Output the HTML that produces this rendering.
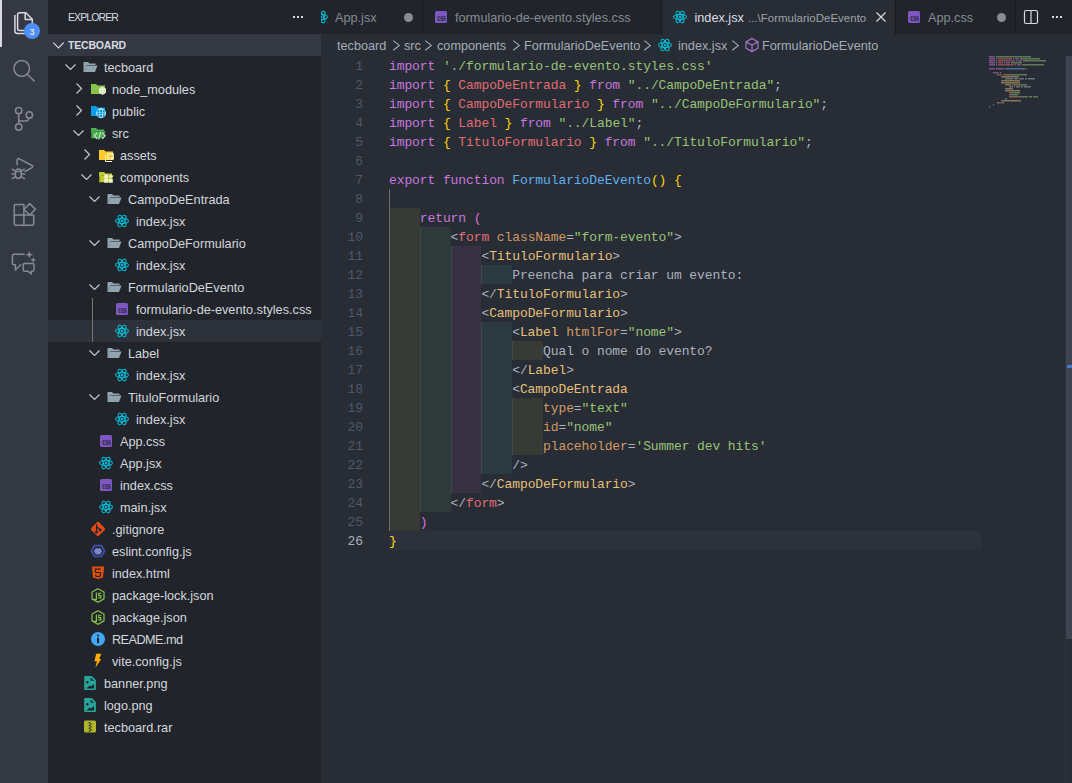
<!DOCTYPE html><html><head><meta charset="utf-8"><style>
*{box-sizing:border-box;margin:0;padding:0}
html,body{width:1072px;height:783px;overflow:hidden;background:#282c34;font-family:"Liberation Sans", sans-serif;}
.abs{position:absolute}
#act{position:absolute;left:0;top:0;width:48px;height:783px;background:#333842}
#side{position:absolute;left:48px;top:0;width:273px;height:783px;background:#21252b;overflow:hidden}
#ed{position:absolute;left:321px;top:0;width:751px;height:783px;background:#282c34;overflow:hidden}
.row{position:absolute;left:0;width:273px;height:22px;}
.lbl{position:absolute;top:0;height:22px;line-height:22px;font-size:12.7px;color:#d4d7dd;white-space:pre}
.ico{position:absolute;top:3px;width:16px;height:16px}
.tw{position:absolute;top:3px;width:16px;height:16px}
.ln{position:absolute;left:0;width:42px;text-align:right;height:19px;line-height:19px;font-family:"Liberation Mono", monospace;font-size:13px;letter-spacing:-0.1px;color:#4f5868;white-space:pre}
.cl{position:absolute;left:68px;height:19px;line-height:19px;font-family:"Liberation Mono", monospace;font-size:13px;letter-spacing:-0.1px;color:#abb2bf;white-space:pre}
.tab{position:absolute;top:0;height:34px;background:#21252b;border-right:1px solid #181a1f}
.tabt{position:absolute;top:1px;height:34px;line-height:34px;font-size:12.7px;white-space:pre}
.bc{position:absolute;top:35px;height:22px;line-height:22px;font-size:12.7px;color:#a5acb7;white-space:pre}
</style></head><body><div id="act"><div class="abs" style="left:0;top:0;width:2px;height:47px;background:#d7dae0"></div><svg class="abs" style="left:0;top:0" width="48" height="300" viewBox="0 0 48 300" fill="none" stroke-width="1.5" stroke-linejoin="round" stroke-linecap="round">
<g stroke="#d7dae0">
<path d="M19.6 12.8H25.8L32.3 19.3V28.5a2 2 0 0 1-2 2H19.6a2 2 0 0 1-2-2V14.8a2 2 0 0 1 2-2z"/>
<path d="M25.2 12.8V19.6H32.3"/>
<path d="M14.9 15.6V31a2.4 2.4 0 0 0 2.4 2.4H25"/>
</g>
<g stroke="#868a92">
<circle cx="21.7" cy="68.4" r="7.8"/><path d="M27.5 74.5L34.2 81"/>
<circle cx="18.7" cy="110.6" r="3.2"/><circle cx="29.3" cy="115" r="3.2"/><circle cx="18.7" cy="127" r="3.2"/>
<path d="M18.7 113.8V123.8"/><path d="M18.7 121.1H25.8a3 3 0 0 0 3-3V118.2"/>
<path d="M17.1 164.8V160.2a1.6 1.6 0 0 1 2.3-1.4L32 165.5a1.2 1.2 0 0 1 0 2.1L25 171.5"/>
<path d="M15.4 172a2.9 2.9 0 0 1 5.8 0v3.6a2.9 2.9 0 0 1-5.8 0z"/>
<path d="M15.4 171.6h5.8M12.2 169.2l3.2 2M24.4 169.2l-3.2 2M12 174h3.4M21.2 174h3.4M12.2 178.6l3.2-2M24.4 178.6l-3.2-2"/>
<path d="M14.3 205.6a1 1 0 0 1 1-1H23.9V225.2H15.3a1 1 0 0 1-1-1z"/>
<path d="M14.3 215H33.7V224.2a1 1 0 0 1-1 1H23.9"/>
<path d="M29.7 203.6L35.4 209.3 29.7 215 24 209.3z"/>
<path d="M24 254.2H14a1.6 1.6 0 0 0-1.6 1.6V263.2a1.6 1.6 0 0 0 1.6 1.6h1.4V270l5.4-5.2"/>
<path d="M24.6 263.6H32.6a1.4 1.4 0 0 1 1.4 1.4V269.8a1.4 1.4 0 0 1-1.4 1.4H31.2V274L28 271.2H24.6a1.4 1.4 0 0 1-1.4-1.4V265a1.4 1.4 0 0 1 1.4-1.4z"/>
</g>
<g fill="#868a92" stroke="none">
<path d="M29.3 250.8L30.3 253.7 33.2 254.7 30.3 255.7 29.3 258.6 28.3 255.7 25.4 254.7 28.3 253.7z"/>
<path d="M33.2 256.9L34 259.1 36.2 259.9 34 260.7 33.2 262.9 32.4 260.7 30.2 259.9 32.4 259.1z"/>
</g>
</svg><div class="abs" style="left:24px;top:23px;width:16px;height:16px;border-radius:8px;background:#4d8ef7;color:#fff;font-size:9px;line-height:18px;text-align:center">3</div></div><div id="side"><div class="abs" style="left:20px;top:0;height:34px;line-height:34px;font-size:10.5px;letter-spacing:-0.9px;color:#d7dae0">EXPLORER</div><div class="abs" style="left:245px;top:16px;width:2px;height:2px;background:#d7dae0"></div><div class="abs" style="left:249px;top:16px;width:2px;height:2px;background:#d7dae0"></div><div class="abs" style="left:253px;top:16px;width:2px;height:2px;background:#d7dae0"></div><div class="abs" style="left:0;top:34px;width:273px;height:22px;background:#333842"></div><svg class="abs" style="left:2.5px;top:36.5px" width="16" height="16" viewBox="0 0 16 16"><path d="M2.3 5.6l5.2 5.4 5.2-5.4" fill="none" stroke="#d7dae0" stroke-width="1.2"/></svg><div class="abs" style="left:20px;top:34px;height:22px;line-height:22px;font-size:10.5px;font-weight:bold;letter-spacing:-0.2px;color:#d7dae0">TECBOARD</div><svg class="abs" style="left:15px;top:59px" width="16" height="16" viewBox="0 0 16 16"><path d="M2.5 5.5l5 5 5-5" fill="none" stroke="#c5c8ce" stroke-width="1.2"/></svg><svg class="abs" style="left:34px;top:59px" width="16" height="16" viewBox="0 0 16 16"><path d="M1.5 3h4.5l1.5 1.5h6v1.5H4.5L2 13H1.5z" fill="#90a4ae"/><path d="M4.2 6.5h11.3l-2.5 6.5H1.7z" fill="#90a4ae"/></svg><div class="lbl" style="left:56px;top:57px">tecboard</div><svg class="abs" style="left:23px;top:81px" width="16" height="16" viewBox="0 0 16 16"><path d="M5.5 2.5l5 5-5 5" fill="none" stroke="#c5c8ce" stroke-width="1.2"/></svg><svg class="abs" style="left:42px;top:81px" width="16" height="16" viewBox="0 0 16 16"><path d="M1 3h5l1.5 1.5H15v8.5H1z" fill="#8bc34a"/><path d="M12.5 5.6l3.6 2.1v4.1l-3.6 2.1-3.6-2.1V7.7z" fill="#dcedc8"/></svg><div class="lbl" style="left:64px;top:79px">node_modules</div><svg class="abs" style="left:23px;top:103px" width="16" height="16" viewBox="0 0 16 16"><path d="M5.5 2.5l5 5-5 5" fill="none" stroke="#c5c8ce" stroke-width="1.2"/></svg><svg class="abs" style="left:42px;top:103px" width="16" height="16" viewBox="0 0 16 16"><path d="M1 3h5l1.5 1.5H15v8.5H1z" fill="#039be5"/><circle cx="11" cy="10.3" r="5" fill="#b3e5fc"/><path d="M7.3 6.9h2v2h-2zM10 6.9h2v2h-2zM12.7 6.9h2v2h-2zM7.3 9.4h2v2h-2zM10 9.4h2v2h-2zM12.7 9.4h2v2h-2zM7.3 11.9h2v2h-2zM10 11.9h2v2h-2zM12.7 11.9h2v2h-2z" fill="#039be5"/></svg><div class="lbl" style="left:64px;top:101px">public</div><svg class="abs" style="left:23px;top:125px" width="16" height="16" viewBox="0 0 16 16"><path d="M2.5 5.5l5 5 5-5" fill="none" stroke="#c5c8ce" stroke-width="1.2"/></svg><svg class="abs" style="left:42px;top:125px" width="16" height="16" viewBox="0 0 16 16"><path d="M1 3h5l1.5 1.5H14v1.5H4L1.5 12.5z" fill="#4caf50"/><path d="M3.5 6.2h12L13 13.2H1z" fill="#4caf50"/><path d="M7.3 7.6l-3 3.2 3 3.2M12.2 7.6l3 3.2-3 3.2M10.6 6.8l-1.8 7.9" stroke="#c8e6c9" stroke-width="1.1" fill="none"/></svg><div class="lbl" style="left:64px;top:123px">src</div><svg class="abs" style="left:31px;top:147px" width="16" height="16" viewBox="0 0 16 16"><path d="M5.5 2.5l5 5-5 5" fill="none" stroke="#c5c8ce" stroke-width="1.2"/></svg><svg class="abs" style="left:50px;top:147px" width="16" height="16" viewBox="0 0 16 16"><path d="M1 3h5l1.5 1.5H15v8.5H1z" fill="#ffca28"/><path d="M7.5 8v6.5h6.5" stroke="#fff9c4" stroke-width="1" fill="none"/><path d="M9.3 6.2h6.5v6.5H9.3z" fill="#fff9c4"/><path d="M10.6 8h4M10.6 9.6h4M10.6 11.2h2.5" stroke="#ffa000" stroke-width="0.9"/></svg><div class="lbl" style="left:72px;top:145px">assets</div><svg class="abs" style="left:31px;top:169px" width="16" height="16" viewBox="0 0 16 16"><path d="M2.5 5.5l5 5 5-5" fill="none" stroke="#c5c8ce" stroke-width="1.2"/></svg><svg class="abs" style="left:50px;top:169px" width="16" height="16" viewBox="0 0 16 16"><path d="M1 3h5l1.5 1.5H14v1.5H4L1.5 12.5z" fill="#c0ca33"/><path d="M3.5 6.2h12L13 13.2H1z" fill="#c0ca33"/><path d="M6.2 5.6h4v3.8h-4zM6.2 10h4v3.8h-4zM10.8 10h4v3.8h-4z" fill="#f0f4c3"/><path d="M12.8 5.2l2.1 2.1-2.1 2.1-2.1-2.1z" fill="#f0f4c3"/></svg><div class="lbl" style="left:72px;top:167px">components</div><svg class="abs" style="left:39px;top:191px" width="16" height="16" viewBox="0 0 16 16"><path d="M2.5 5.5l5 5 5-5" fill="none" stroke="#c5c8ce" stroke-width="1.2"/></svg><svg class="abs" style="left:58px;top:191px" width="16" height="16" viewBox="0 0 16 16"><path d="M1.5 3h4.5l1.5 1.5h6v1.5H4.5L2 13H1.5z" fill="#90a4ae"/><path d="M4.2 6.5h11.3l-2.5 6.5H1.7z" fill="#90a4ae"/></svg><div class="lbl" style="left:80px;top:189px">CampoDeEntrada</div><svg class="abs" style="left:66px;top:213px" width="16" height="16" viewBox="0 0 16 16"><g fill="none" stroke="#00bcd4" stroke-width="1.1"><ellipse cx="8" cy="8" rx="6.4" ry="2.5"/><ellipse cx="8" cy="8" rx="6.4" ry="2.5" transform="rotate(60 8 8)"/><ellipse cx="8" cy="8" rx="6.4" ry="2.5" transform="rotate(-60 8 8)"/></g><circle cx="8" cy="8" r="1.2" fill="#00bcd4"/></svg><div class="lbl" style="left:88px;top:211px">index.jsx</div><svg class="abs" style="left:39px;top:235px" width="16" height="16" viewBox="0 0 16 16"><path d="M2.5 5.5l5 5 5-5" fill="none" stroke="#c5c8ce" stroke-width="1.2"/></svg><svg class="abs" style="left:58px;top:235px" width="16" height="16" viewBox="0 0 16 16"><path d="M1.5 3h4.5l1.5 1.5h6v1.5H4.5L2 13H1.5z" fill="#90a4ae"/><path d="M4.2 6.5h11.3l-2.5 6.5H1.7z" fill="#90a4ae"/></svg><div class="lbl" style="left:80px;top:233px">CampoDeFormulario</div><svg class="abs" style="left:66px;top:257px" width="16" height="16" viewBox="0 0 16 16"><g fill="none" stroke="#00bcd4" stroke-width="1.1"><ellipse cx="8" cy="8" rx="6.4" ry="2.5"/><ellipse cx="8" cy="8" rx="6.4" ry="2.5" transform="rotate(60 8 8)"/><ellipse cx="8" cy="8" rx="6.4" ry="2.5" transform="rotate(-60 8 8)"/></g><circle cx="8" cy="8" r="1.2" fill="#00bcd4"/></svg><div class="lbl" style="left:88px;top:255px">index.jsx</div><svg class="abs" style="left:39px;top:279px" width="16" height="16" viewBox="0 0 16 16"><path d="M2.5 5.5l5 5 5-5" fill="none" stroke="#c5c8ce" stroke-width="1.2"/></svg><svg class="abs" style="left:58px;top:279px" width="16" height="16" viewBox="0 0 16 16"><path d="M1.5 3h4.5l1.5 1.5h6v1.5H4.5L2 13H1.5z" fill="#90a4ae"/><path d="M4.2 6.5h11.3l-2.5 6.5H1.7z" fill="#90a4ae"/></svg><div class="lbl" style="left:80px;top:277px">FormularioDeEvento</div><svg class="abs" style="left:66px;top:301px" width="16" height="16" viewBox="0 0 16 16"><rect x="2" y="2" width="12" height="12" rx="1.5" fill="#7e57c2"/><text x="4.3" y="12.4" font-family="Liberation Sans" font-weight="bold" font-size="8.8" textLength="8.6" lengthAdjust="spacingAndGlyphs" fill="#21252b">css</text></svg><div class="lbl" style="left:88px;top:299px">formulario-de-evento.styles.css</div><div class="abs" style="left:0;top:320px;width:273px;height:22px;background:#2c313a"></div><svg class="abs" style="left:66px;top:323px" width="16" height="16" viewBox="0 0 16 16"><g fill="none" stroke="#00bcd4" stroke-width="1.1"><ellipse cx="8" cy="8" rx="6.4" ry="2.5"/><ellipse cx="8" cy="8" rx="6.4" ry="2.5" transform="rotate(60 8 8)"/><ellipse cx="8" cy="8" rx="6.4" ry="2.5" transform="rotate(-60 8 8)"/></g><circle cx="8" cy="8" r="1.2" fill="#00bcd4"/></svg><div class="lbl" style="left:88px;top:321px">index.jsx</div><svg class="abs" style="left:39px;top:345px" width="16" height="16" viewBox="0 0 16 16"><path d="M2.5 5.5l5 5 5-5" fill="none" stroke="#c5c8ce" stroke-width="1.2"/></svg><svg class="abs" style="left:58px;top:345px" width="16" height="16" viewBox="0 0 16 16"><path d="M1.5 3h4.5l1.5 1.5h6v1.5H4.5L2 13H1.5z" fill="#90a4ae"/><path d="M4.2 6.5h11.3l-2.5 6.5H1.7z" fill="#90a4ae"/></svg><div class="lbl" style="left:80px;top:343px">Label</div><svg class="abs" style="left:66px;top:367px" width="16" height="16" viewBox="0 0 16 16"><g fill="none" stroke="#00bcd4" stroke-width="1.1"><ellipse cx="8" cy="8" rx="6.4" ry="2.5"/><ellipse cx="8" cy="8" rx="6.4" ry="2.5" transform="rotate(60 8 8)"/><ellipse cx="8" cy="8" rx="6.4" ry="2.5" transform="rotate(-60 8 8)"/></g><circle cx="8" cy="8" r="1.2" fill="#00bcd4"/></svg><div class="lbl" style="left:88px;top:365px">index.jsx</div><svg class="abs" style="left:39px;top:389px" width="16" height="16" viewBox="0 0 16 16"><path d="M2.5 5.5l5 5 5-5" fill="none" stroke="#c5c8ce" stroke-width="1.2"/></svg><svg class="abs" style="left:58px;top:389px" width="16" height="16" viewBox="0 0 16 16"><path d="M1.5 3h4.5l1.5 1.5h6v1.5H4.5L2 13H1.5z" fill="#90a4ae"/><path d="M4.2 6.5h11.3l-2.5 6.5H1.7z" fill="#90a4ae"/></svg><div class="lbl" style="left:80px;top:387px">TituloFormulario</div><svg class="abs" style="left:66px;top:411px" width="16" height="16" viewBox="0 0 16 16"><g fill="none" stroke="#00bcd4" stroke-width="1.1"><ellipse cx="8" cy="8" rx="6.4" ry="2.5"/><ellipse cx="8" cy="8" rx="6.4" ry="2.5" transform="rotate(60 8 8)"/><ellipse cx="8" cy="8" rx="6.4" ry="2.5" transform="rotate(-60 8 8)"/></g><circle cx="8" cy="8" r="1.2" fill="#00bcd4"/></svg><div class="lbl" style="left:88px;top:409px">index.jsx</div><svg class="abs" style="left:50px;top:433px" width="16" height="16" viewBox="0 0 16 16"><rect x="2" y="2" width="12" height="12" rx="1.5" fill="#7e57c2"/><text x="4.3" y="12.4" font-family="Liberation Sans" font-weight="bold" font-size="8.8" textLength="8.6" lengthAdjust="spacingAndGlyphs" fill="#21252b">css</text></svg><div class="lbl" style="left:72px;top:431px">App.css</div><svg class="abs" style="left:50px;top:455px" width="16" height="16" viewBox="0 0 16 16"><g fill="none" stroke="#00bcd4" stroke-width="1.1"><ellipse cx="8" cy="8" rx="6.4" ry="2.5"/><ellipse cx="8" cy="8" rx="6.4" ry="2.5" transform="rotate(60 8 8)"/><ellipse cx="8" cy="8" rx="6.4" ry="2.5" transform="rotate(-60 8 8)"/></g><circle cx="8" cy="8" r="1.2" fill="#00bcd4"/></svg><div class="lbl" style="left:72px;top:453px">App.jsx</div><svg class="abs" style="left:50px;top:477px" width="16" height="16" viewBox="0 0 16 16"><rect x="2" y="2" width="12" height="12" rx="1.5" fill="#7e57c2"/><text x="4.3" y="12.4" font-family="Liberation Sans" font-weight="bold" font-size="8.8" textLength="8.6" lengthAdjust="spacingAndGlyphs" fill="#21252b">css</text></svg><div class="lbl" style="left:72px;top:475px">index.css</div><svg class="abs" style="left:50px;top:499px" width="16" height="16" viewBox="0 0 16 16"><g fill="none" stroke="#00bcd4" stroke-width="1.1"><ellipse cx="8" cy="8" rx="6.4" ry="2.5"/><ellipse cx="8" cy="8" rx="6.4" ry="2.5" transform="rotate(60 8 8)"/><ellipse cx="8" cy="8" rx="6.4" ry="2.5" transform="rotate(-60 8 8)"/></g><circle cx="8" cy="8" r="1.2" fill="#00bcd4"/></svg><div class="lbl" style="left:72px;top:497px">main.jsx</div><svg class="abs" style="left:42px;top:521px" width="16" height="16" viewBox="0 0 16 16"><path d="M7.1 1.3a1.3 1.3 0 0 1 1.8 0l5.8 5.8a1.3 1.3 0 0 1 0 1.8l-5.8 5.8a1.3 1.3 0 0 1-1.8 0L1.3 8.9a1.3 1.3 0 0 1 0-1.8z" fill="#e64a19"/><path d="M6.6 3.2v8M6.9 5.6l3 3" stroke="#21252b" stroke-width="1.3"/><circle cx="6.6" cy="11.2" r="1.4" fill="#21252b"/><circle cx="10.2" cy="9" r="1.4" fill="#21252b"/></svg><div class="lbl" style="left:64px;top:519px">.gitignore</div><svg class="abs" style="left:42px;top:543px" width="16" height="16" viewBox="0 0 16 16"><path d="M4.6 2.6h6.8L14.6 8l-3.2 5.5H4.6L1.4 8z" fill="none" stroke="#3f51b5" stroke-width="1.7"/><path d="M5.8 5.3h4.4L12.2 8l-2 3.5H5.8L3.8 8z" fill="#7986cb"/></svg><div class="lbl" style="left:64px;top:541px">eslint.config.js</div><svg class="abs" style="left:42px;top:565px" width="16" height="16" viewBox="0 0 16 16"><path d="M1.9 1.5h12.2l-1.1 11L8 13.9 3 12.5z" fill="#e65100"/><path d="M10.9 4.2H5.3l0.3 3.3h5l-0.4 3.5L8 11.7l-2.2-0.7-0.15-1.4" fill="none" stroke="#21252b" stroke-width="1.2"/></svg><div class="lbl" style="left:64px;top:563px">index.html</div><svg class="abs" style="left:42px;top:587px" width="16" height="16" viewBox="0 0 16 16"><path d="M8 1.7l6 3.4v6.7L8 15.2 2 11.8V5.1z" fill="none" stroke="#8bc34a" stroke-width="1.2"/><path d="M6.4 5.4V12.4H2.6" fill="none" stroke="#8bc34a" stroke-width="1.2"/><path d="M11.4 6.3H8.7V8.6H10.9V10.9H8.3" fill="none" stroke="#8bc34a" stroke-width="1.1"/></svg><div class="lbl" style="left:64px;top:585px">package-lock.json</div><svg class="abs" style="left:42px;top:609px" width="16" height="16" viewBox="0 0 16 16"><path d="M8 1.7l6 3.4v6.7L8 15.2 2 11.8V5.1z" fill="none" stroke="#8bc34a" stroke-width="1.2"/><path d="M6.4 5.4V12.4H2.6" fill="none" stroke="#8bc34a" stroke-width="1.2"/><path d="M11.4 6.3H8.7V8.6H10.9V10.9H8.3" fill="none" stroke="#8bc34a" stroke-width="1.1"/></svg><div class="lbl" style="left:64px;top:607px">package.json</div><svg class="abs" style="left:42px;top:631px" width="16" height="16" viewBox="0 0 16 16"><circle cx="8" cy="8" r="7" fill="#42a5f5"/><rect x="7" y="6.7" width="2" height="5.5" fill="#21252b"/><circle cx="8" cy="4.5" r="1.1" fill="#21252b"/></svg><div class="lbl" style="left:64px;top:629px;letter-spacing:-0.55px">README.md</div><svg class="abs" style="left:42px;top:653px" width="16" height="16" viewBox="0 0 16 16"><path d="M6.2 0.8H11.3L9.2 6H11.3L5.4 14.8 6.9 8.3H4.4z" fill="#ffab00"/></svg><div class="lbl" style="left:64px;top:651px">vite.config.js</div><svg class="abs" style="left:34px;top:675px" width="16" height="16" viewBox="0 0 16 16"><path d="M3.2 1h6.6L13.9 5.1V13.9a1 1 0 0 1-1 1H3.2a1 1 0 0 1-1-1V2a1 1 0 0 1 1-1z" fill="#26a69a"/><path d="M8.6 2.4V5.8H12z" fill="#21252b"/><circle cx="5.3" cy="7.2" r="1.2" fill="#21252b"/><path d="M4.2 13.4l3.5-2.8 1.3 0.9 3-2.6v4.5z" fill="#21252b"/></svg><div class="lbl" style="left:56px;top:673px">banner.png</div><svg class="abs" style="left:34px;top:697px" width="16" height="16" viewBox="0 0 16 16"><path d="M3.2 1h6.6L13.9 5.1V13.9a1 1 0 0 1-1 1H3.2a1 1 0 0 1-1-1V2a1 1 0 0 1 1-1z" fill="#26a69a"/><path d="M8.6 2.4V5.8H12z" fill="#21252b"/><circle cx="5.3" cy="7.2" r="1.2" fill="#21252b"/><path d="M4.2 13.4l3.5-2.8 1.3 0.9 3-2.6v4.5z" fill="#21252b"/></svg><div class="lbl" style="left:56px;top:695px">logo.png</div><svg class="abs" style="left:34px;top:719px" width="16" height="16" viewBox="0 0 16 16"><rect x="2" y="1.6" width="12" height="12" rx="1.5" fill="#afb42b"/><path d="M6.8 3h1.4v1.4H6.8zM8.2 4.4h1.4v1.4H8.2zM6.8 5.8h1.4v1.4H6.8zM8.2 7.2h1.4v1.4H8.2zM6.8 8.6h1.4v1.4H6.8zM8.2 10h1.4v1.4H8.2zM6.8 11.4h1.4v1.4H6.8z" fill="#21252b"/></svg><div class="lbl" style="left:56px;top:717px">tecboard.rar</div><div class="abs" style="left:44px;top:298px;width:1px;height:44px;background:#7a7566"></div></div><div id="ed"><div class="abs" style="left:0;top:0;width:751px;height:34px;background:#21252b"></div><div class="abs" style="left:-18px;top:0;width:120px;height:34px;background:#21252b;border-right:1px solid #181a1f"></div><div class="abs" style="left:102px;top:0;width:239px;height:34px;background:#21252b;border-right:1px solid #181a1f"></div><div class="abs" style="left:341px;top:0;width:234px;height:34px;background:#282c34;border-right:1px solid #181a1f"></div><div class="abs" style="left:575px;top:0;width:120px;height:34px;background:#21252b;border-right:1px solid #181a1f"></div><svg class="abs" style="left:-8px;top:9px" width="16" height="16" viewBox="0 0 16 16"><g fill="none" stroke="#00bcd4" stroke-width="1.1"><ellipse cx="8" cy="8" rx="6.4" ry="2.5"/><ellipse cx="8" cy="8" rx="6.4" ry="2.5" transform="rotate(60 8 8)"/><ellipse cx="8" cy="8" rx="6.4" ry="2.5" transform="rotate(-60 8 8)"/></g><circle cx="8" cy="8" r="1.2" fill="#00bcd4"/></svg><div class="tabt" style="left:14px;color:#868b94">App.jsx</div><div class="abs" style="left:83px;top:12.5px;width:9px;height:9px;border-radius:5px;background:#868b94"></div><svg class="abs" style="left:112px;top:9px" width="16" height="16" viewBox="0 0 16 16"><rect x="2" y="2" width="12" height="12" rx="1.5" fill="#7e57c2"/><text x="4.3" y="12.4" font-family="Liberation Sans" font-weight="bold" font-size="8.8" textLength="8.6" lengthAdjust="spacingAndGlyphs" fill="#21252b">css</text></svg><div class="tabt" style="left:134px;color:#868b94">formulario-de-evento.styles.css</div><svg class="abs" style="left:351px;top:9px" width="16" height="16" viewBox="0 0 16 16"><g fill="none" stroke="#00bcd4" stroke-width="1.1"><ellipse cx="8" cy="8" rx="6.4" ry="2.5"/><ellipse cx="8" cy="8" rx="6.4" ry="2.5" transform="rotate(60 8 8)"/><ellipse cx="8" cy="8" rx="6.4" ry="2.5" transform="rotate(-60 8 8)"/></g><circle cx="8" cy="8" r="1.2" fill="#00bcd4"/></svg><div class="tabt" style="left:373.5px;color:#dcdfe4">index.jsx</div><div class="tabt" style="left:427px;color:#9ea3ab;font-size:11.5px">...\FormularioDeEvento</div><svg class="abs" style="left:552px;top:9px" width="16" height="16" viewBox="0 0 16 16"><path d="M3.5 3.5l9 9M12.5 3.5l-9 9" stroke="#d7dae0" stroke-width="1.2"/></svg><svg class="abs" style="left:585px;top:9px" width="16" height="16" viewBox="0 0 16 16"><rect x="2" y="2" width="12" height="12" rx="1.5" fill="#7e57c2"/><text x="4.3" y="12.4" font-family="Liberation Sans" font-weight="bold" font-size="8.8" textLength="8.6" lengthAdjust="spacingAndGlyphs" fill="#21252b">css</text></svg><div class="tabt" style="left:607px;color:#868b94">App.css</div><div class="abs" style="left:676px;top:12.5px;width:9px;height:9px;border-radius:5px;background:#868b94"></div><svg class="abs" style="left:702px;top:9px" width="16" height="16" viewBox="0 0 16 16" fill="none" stroke="#d7dae0" stroke-width="1.2"><rect x="1.5" y="1.5" width="13" height="13" rx="1.5"/><path d="M8 1.5v13"/></svg><div class="abs" style="left:731px;top:16px;width:2px;height:2px;background:#d7dae0"></div><div class="abs" style="left:735px;top:16px;width:2px;height:2px;background:#d7dae0"></div><div class="abs" style="left:739px;top:16px;width:2px;height:2px;background:#d7dae0"></div><div class="bc" style="left:16px">tecboard</div><svg class="abs" style="left:68px;top:37px" width="16" height="16" viewBox="0 0 16 16"><path d="M4.3 3.6l6 4.8-6 4.8" fill="none" stroke="#a5acb7" stroke-width="1.1"/></svg><div class="bc" style="left:83px">src</div><svg class="abs" style="left:100px;top:37px" width="16" height="16" viewBox="0 0 16 16"><path d="M4.3 3.6l6 4.8-6 4.8" fill="none" stroke="#a5acb7" stroke-width="1.1"/></svg><div class="bc" style="left:116px">components</div><svg class="abs" style="left:188px;top:37px" width="16" height="16" viewBox="0 0 16 16"><path d="M4.3 3.6l6 4.8-6 4.8" fill="none" stroke="#a5acb7" stroke-width="1.1"/></svg><div class="bc" style="left:203px">FormularioDeEvento</div><svg class="abs" style="left:319px;top:37px" width="16" height="16" viewBox="0 0 16 16"><path d="M4.3 3.6l6 4.8-6 4.8" fill="none" stroke="#a5acb7" stroke-width="1.1"/></svg><svg class="abs" style="left:336px;top:37px" width="16" height="16" viewBox="0 0 16 16"><g fill="none" stroke="#00bcd4" stroke-width="1.1"><ellipse cx="8" cy="8" rx="6.4" ry="2.5"/><ellipse cx="8" cy="8" rx="6.4" ry="2.5" transform="rotate(60 8 8)"/><ellipse cx="8" cy="8" rx="6.4" ry="2.5" transform="rotate(-60 8 8)"/></g><circle cx="8" cy="8" r="1.2" fill="#00bcd4"/></svg><div class="bc" style="left:357px">index.jsx</div><svg class="abs" style="left:407px;top:37px" width="16" height="16" viewBox="0 0 16 16"><path d="M4.3 3.6l6 4.8-6 4.8" fill="none" stroke="#a5acb7" stroke-width="1.1"/></svg><svg class="abs" style="left:423px;top:37px" width="16" height="16" viewBox="0 0 16 16" fill="none" stroke="#b180d7" stroke-width="1.1"><path d="M8 1.5l6 3.3v6.4L8 14.5 2 11.2V4.8z"/><path d="M2 4.8l6 3.4 6-3.4M8 8.2v6.3"/></svg><div class="bc" style="left:441px">FormularioDeEvento</div><div class="abs" style="left:68px;top:531px;width:592px;height:19px;background:#2c313c"></div><div class="abs" style="left:68.00px;top:208px;width:30.80px;height:19px;background:rgba(255,255,64,0.07)"></div><div class="abs" style="left:68.00px;top:227px;width:30.80px;height:19px;background:rgba(255,255,64,0.07)"></div><div class="abs" style="left:98.80px;top:227px;width:30.80px;height:19px;background:rgba(127,255,127,0.07)"></div><div class="abs" style="left:68.00px;top:246px;width:30.80px;height:19px;background:rgba(255,255,64,0.07)"></div><div class="abs" style="left:98.80px;top:246px;width:30.80px;height:19px;background:rgba(127,255,127,0.07)"></div><div class="abs" style="left:129.60px;top:246px;width:30.80px;height:19px;background:rgba(255,127,255,0.07)"></div><div class="abs" style="left:68.00px;top:265px;width:30.80px;height:19px;background:rgba(255,255,64,0.07)"></div><div class="abs" style="left:98.80px;top:265px;width:30.80px;height:19px;background:rgba(127,255,127,0.07)"></div><div class="abs" style="left:129.60px;top:265px;width:30.80px;height:19px;background:rgba(255,127,255,0.07)"></div><div class="abs" style="left:160.40px;top:265px;width:30.80px;height:19px;background:rgba(79,236,236,0.07)"></div><div class="abs" style="left:68.00px;top:284px;width:30.80px;height:19px;background:rgba(255,255,64,0.07)"></div><div class="abs" style="left:98.80px;top:284px;width:30.80px;height:19px;background:rgba(127,255,127,0.07)"></div><div class="abs" style="left:129.60px;top:284px;width:30.80px;height:19px;background:rgba(255,127,255,0.07)"></div><div class="abs" style="left:68.00px;top:303px;width:30.80px;height:19px;background:rgba(255,255,64,0.07)"></div><div class="abs" style="left:98.80px;top:303px;width:30.80px;height:19px;background:rgba(127,255,127,0.07)"></div><div class="abs" style="left:129.60px;top:303px;width:30.80px;height:19px;background:rgba(255,127,255,0.07)"></div><div class="abs" style="left:68.00px;top:322px;width:30.80px;height:19px;background:rgba(255,255,64,0.07)"></div><div class="abs" style="left:98.80px;top:322px;width:30.80px;height:19px;background:rgba(127,255,127,0.07)"></div><div class="abs" style="left:129.60px;top:322px;width:30.80px;height:19px;background:rgba(255,127,255,0.07)"></div><div class="abs" style="left:160.40px;top:322px;width:30.80px;height:19px;background:rgba(79,236,236,0.07)"></div><div class="abs" style="left:68.00px;top:341px;width:30.80px;height:19px;background:rgba(255,255,64,0.07)"></div><div class="abs" style="left:98.80px;top:341px;width:30.80px;height:19px;background:rgba(127,255,127,0.07)"></div><div class="abs" style="left:129.60px;top:341px;width:30.80px;height:19px;background:rgba(255,127,255,0.07)"></div><div class="abs" style="left:160.40px;top:341px;width:30.80px;height:19px;background:rgba(79,236,236,0.07)"></div><div class="abs" style="left:191.20px;top:341px;width:30.80px;height:19px;background:rgba(255,255,64,0.07)"></div><div class="abs" style="left:68.00px;top:360px;width:30.80px;height:19px;background:rgba(255,255,64,0.07)"></div><div class="abs" style="left:98.80px;top:360px;width:30.80px;height:19px;background:rgba(127,255,127,0.07)"></div><div class="abs" style="left:129.60px;top:360px;width:30.80px;height:19px;background:rgba(255,127,255,0.07)"></div><div class="abs" style="left:160.40px;top:360px;width:30.80px;height:19px;background:rgba(79,236,236,0.07)"></div><div class="abs" style="left:68.00px;top:379px;width:30.80px;height:19px;background:rgba(255,255,64,0.07)"></div><div class="abs" style="left:98.80px;top:379px;width:30.80px;height:19px;background:rgba(127,255,127,0.07)"></div><div class="abs" style="left:129.60px;top:379px;width:30.80px;height:19px;background:rgba(255,127,255,0.07)"></div><div class="abs" style="left:160.40px;top:379px;width:30.80px;height:19px;background:rgba(79,236,236,0.07)"></div><div class="abs" style="left:68.00px;top:398px;width:30.80px;height:19px;background:rgba(255,255,64,0.07)"></div><div class="abs" style="left:98.80px;top:398px;width:30.80px;height:19px;background:rgba(127,255,127,0.07)"></div><div class="abs" style="left:129.60px;top:398px;width:30.80px;height:19px;background:rgba(255,127,255,0.07)"></div><div class="abs" style="left:160.40px;top:398px;width:30.80px;height:19px;background:rgba(79,236,236,0.07)"></div><div class="abs" style="left:191.20px;top:398px;width:30.80px;height:19px;background:rgba(255,255,64,0.07)"></div><div class="abs" style="left:68.00px;top:417px;width:30.80px;height:19px;background:rgba(255,255,64,0.07)"></div><div class="abs" style="left:98.80px;top:417px;width:30.80px;height:19px;background:rgba(127,255,127,0.07)"></div><div class="abs" style="left:129.60px;top:417px;width:30.80px;height:19px;background:rgba(255,127,255,0.07)"></div><div class="abs" style="left:160.40px;top:417px;width:30.80px;height:19px;background:rgba(79,236,236,0.07)"></div><div class="abs" style="left:191.20px;top:417px;width:30.80px;height:19px;background:rgba(255,255,64,0.07)"></div><div class="abs" style="left:68.00px;top:436px;width:30.80px;height:19px;background:rgba(255,255,64,0.07)"></div><div class="abs" style="left:98.80px;top:436px;width:30.80px;height:19px;background:rgba(127,255,127,0.07)"></div><div class="abs" style="left:129.60px;top:436px;width:30.80px;height:19px;background:rgba(255,127,255,0.07)"></div><div class="abs" style="left:160.40px;top:436px;width:30.80px;height:19px;background:rgba(79,236,236,0.07)"></div><div class="abs" style="left:191.20px;top:436px;width:30.80px;height:19px;background:rgba(255,255,64,0.07)"></div><div class="abs" style="left:68.00px;top:455px;width:30.80px;height:19px;background:rgba(255,255,64,0.07)"></div><div class="abs" style="left:98.80px;top:455px;width:30.80px;height:19px;background:rgba(127,255,127,0.07)"></div><div class="abs" style="left:129.60px;top:455px;width:30.80px;height:19px;background:rgba(255,127,255,0.07)"></div><div class="abs" style="left:160.40px;top:455px;width:30.80px;height:19px;background:rgba(79,236,236,0.07)"></div><div class="abs" style="left:68.00px;top:474px;width:30.80px;height:19px;background:rgba(255,255,64,0.07)"></div><div class="abs" style="left:98.80px;top:474px;width:30.80px;height:19px;background:rgba(127,255,127,0.07)"></div><div class="abs" style="left:129.60px;top:474px;width:30.80px;height:19px;background:rgba(255,127,255,0.07)"></div><div class="abs" style="left:68.00px;top:493px;width:30.80px;height:19px;background:rgba(255,255,64,0.07)"></div><div class="abs" style="left:98.80px;top:493px;width:30.80px;height:19px;background:rgba(127,255,127,0.07)"></div><div class="abs" style="left:68.00px;top:512px;width:30.80px;height:19px;background:rgba(255,255,64,0.07)"></div><div class="abs" style="left:68px;top:189px;width:1px;height:342px;background:#6b6f68"></div><div class="abs" style="left:98.80px;top:227px;width:1px;height:285px;background:rgba(120,130,140,0.22)"></div><div class="abs" style="left:129.60px;top:246px;width:1px;height:247px;background:rgba(120,130,140,0.22)"></div><div class="abs" style="left:160.40px;top:265px;width:1px;height:19px;background:rgba(120,130,140,0.22)"></div><div class="abs" style="left:160.40px;top:322px;width:1px;height:152px;background:rgba(120,130,140,0.22)"></div><div class="abs" style="left:191.20px;top:341px;width:1px;height:19px;background:rgba(120,130,140,0.22)"></div><div class="abs" style="left:191.20px;top:398px;width:1px;height:57px;background:rgba(120,130,140,0.22)"></div><div class="ln" style="left:0;top:57px;color:#4f5868">1</div><div class="cl" style="top:57px"><span style="color:#c678dd">import</span><span style="color:#abb2bf"> </span><span style="color:#98c379">&#x27;./formulario-de-evento.styles.css&#x27;</span></div><div class="ln" style="left:0;top:76px;color:#4f5868">2</div><div class="cl" style="top:76px"><span style="color:#c678dd">import</span><span style="color:#abb2bf"> </span><span style="color:#ffd700">{</span><span style="color:#abb2bf"> </span><span style="color:#e06c75">CampoDeEntrada</span><span style="color:#abb2bf"> </span><span style="color:#ffd700">}</span><span style="color:#abb2bf"> </span><span style="color:#c678dd">from</span><span style="color:#abb2bf"> </span><span style="color:#98c379">&quot;../CampoDeEntrada&quot;</span><span style="color:#abb2bf">;</span></div><div class="ln" style="left:0;top:95px;color:#4f5868">3</div><div class="cl" style="top:95px"><span style="color:#c678dd">import</span><span style="color:#abb2bf"> </span><span style="color:#ffd700">{</span><span style="color:#abb2bf"> </span><span style="color:#e06c75">CampoDeFormulario</span><span style="color:#abb2bf"> </span><span style="color:#ffd700">}</span><span style="color:#abb2bf"> </span><span style="color:#c678dd">from</span><span style="color:#abb2bf"> </span><span style="color:#98c379">&quot;../CampoDeFormulario&quot;</span><span style="color:#abb2bf">;</span></div><div class="ln" style="left:0;top:114px;color:#4f5868">4</div><div class="cl" style="top:114px"><span style="color:#c678dd">import</span><span style="color:#abb2bf"> </span><span style="color:#ffd700">{</span><span style="color:#abb2bf"> </span><span style="color:#e06c75">Label</span><span style="color:#abb2bf"> </span><span style="color:#ffd700">}</span><span style="color:#abb2bf"> </span><span style="color:#c678dd">from</span><span style="color:#abb2bf"> </span><span style="color:#98c379">&quot;../Label&quot;</span><span style="color:#abb2bf">;</span></div><div class="ln" style="left:0;top:133px;color:#4f5868">5</div><div class="cl" style="top:133px"><span style="color:#c678dd">import</span><span style="color:#abb2bf"> </span><span style="color:#ffd700">{</span><span style="color:#abb2bf"> </span><span style="color:#e06c75">TituloFormulario</span><span style="color:#abb2bf"> </span><span style="color:#ffd700">}</span><span style="color:#abb2bf"> </span><span style="color:#c678dd">from</span><span style="color:#abb2bf"> </span><span style="color:#98c379">&quot;../TituloFormulario&quot;</span><span style="color:#abb2bf">;</span></div><div class="ln" style="left:0;top:152px;color:#4f5868">6</div><div class="cl" style="top:152px"></div><div class="ln" style="left:0;top:171px;color:#4f5868">7</div><div class="cl" style="top:171px"><span style="color:#c678dd">export</span><span style="color:#abb2bf"> </span><span style="color:#c678dd">function</span><span style="color:#abb2bf"> </span><span style="color:#61afef">FormularioDeEvento</span><span style="color:#ffd700">()</span><span style="color:#abb2bf"> </span><span style="color:#ffd700">{</span></div><div class="ln" style="left:0;top:190px;color:#4f5868">8</div><div class="cl" style="top:190px"></div><div class="ln" style="left:0;top:209px;color:#4f5868">9</div><div class="cl" style="top:209px"><span style="color:#abb2bf">    </span><span style="color:#c678dd">return</span><span style="color:#abb2bf"> </span><span style="color:#da70d6">(</span></div><div class="ln" style="left:0;top:228px;color:#4f5868">10</div><div class="cl" style="top:228px"><span style="color:#abb2bf">        &lt;</span><span style="color:#e06c75">form</span><span style="color:#abb2bf"> </span><span style="color:#d19a66">className</span><span style="color:#abb2bf">=</span><span style="color:#98c379">&quot;form-evento&quot;</span><span style="color:#abb2bf">&gt;</span></div><div class="ln" style="left:0;top:247px;color:#4f5868">11</div><div class="cl" style="top:247px"><span style="color:#abb2bf">            &lt;</span><span style="color:#e5c07b">TituloFormulario</span><span style="color:#abb2bf">&gt;</span></div><div class="ln" style="left:0;top:266px;color:#4f5868">12</div><div class="cl" style="top:266px"><span style="color:#abb2bf">                Preencha para criar um evento:</span></div><div class="ln" style="left:0;top:285px;color:#4f5868">13</div><div class="cl" style="top:285px"><span style="color:#abb2bf">            &lt;/</span><span style="color:#e5c07b">TituloFormulario</span><span style="color:#abb2bf">&gt;</span></div><div class="ln" style="left:0;top:304px;color:#4f5868">14</div><div class="cl" style="top:304px"><span style="color:#abb2bf">            &lt;</span><span style="color:#e5c07b">CampoDeFormulario</span><span style="color:#abb2bf">&gt;</span></div><div class="ln" style="left:0;top:323px;color:#4f5868">15</div><div class="cl" style="top:323px"><span style="color:#abb2bf">                &lt;</span><span style="color:#e5c07b">Label</span><span style="color:#abb2bf"> </span><span style="color:#d19a66">htmlFor</span><span style="color:#abb2bf">=</span><span style="color:#98c379">&quot;nome&quot;</span><span style="color:#abb2bf">&gt;</span></div><div class="ln" style="left:0;top:342px;color:#4f5868">16</div><div class="cl" style="top:342px"><span style="color:#abb2bf">                    Qual o nome do evento?</span></div><div class="ln" style="left:0;top:361px;color:#4f5868">17</div><div class="cl" style="top:361px"><span style="color:#abb2bf">                &lt;/</span><span style="color:#e5c07b">Label</span><span style="color:#abb2bf">&gt;</span></div><div class="ln" style="left:0;top:380px;color:#4f5868">18</div><div class="cl" style="top:380px"><span style="color:#abb2bf">                &lt;</span><span style="color:#e5c07b">CampoDeEntrada</span></div><div class="ln" style="left:0;top:399px;color:#4f5868">19</div><div class="cl" style="top:399px"><span style="color:#abb2bf">                    </span><span style="color:#d19a66">type</span><span style="color:#abb2bf">=</span><span style="color:#98c379">&quot;text&quot;</span></div><div class="ln" style="left:0;top:418px;color:#4f5868">20</div><div class="cl" style="top:418px"><span style="color:#abb2bf">                    </span><span style="color:#d19a66">id</span><span style="color:#abb2bf">=</span><span style="color:#98c379">&quot;nome&quot;</span></div><div class="ln" style="left:0;top:437px;color:#4f5868">21</div><div class="cl" style="top:437px"><span style="color:#abb2bf">                    </span><span style="color:#d19a66">placeholder</span><span style="color:#abb2bf">=</span><span style="color:#98c379">&#x27;Summer dev hits&#x27;</span></div><div class="ln" style="left:0;top:456px;color:#4f5868">22</div><div class="cl" style="top:456px"><span style="color:#abb2bf">                /&gt;</span></div><div class="ln" style="left:0;top:475px;color:#4f5868">23</div><div class="cl" style="top:475px"><span style="color:#abb2bf">            &lt;/</span><span style="color:#e5c07b">CampoDeFormulario</span><span style="color:#abb2bf">&gt;</span></div><div class="ln" style="left:0;top:494px;color:#4f5868">24</div><div class="cl" style="top:494px"><span style="color:#abb2bf">        &lt;/</span><span style="color:#e06c75">form</span><span style="color:#abb2bf">&gt;</span></div><div class="ln" style="left:0;top:513px;color:#4f5868">25</div><div class="cl" style="top:513px"><span style="color:#abb2bf">    </span><span style="color:#da70d6">)</span></div><div class="ln" style="left:0;top:532px;color:#abb2bf">26</div><div class="cl" style="top:532px"><span style="color:#ffd700">}</span></div><div class="abs" style="left:668px;top:56px;width:6px;height:1px;background:#c678dd;opacity:0.5"></div><div class="abs" style="left:668px;top:57px;width:6px;height:1px;background:#c678dd;opacity:0.25"></div><div class="abs" style="left:675px;top:56px;width:35px;height:1px;background:#98c379;opacity:0.5"></div><div class="abs" style="left:675px;top:57px;width:35px;height:1px;background:#98c379;opacity:0.25"></div><div class="abs" style="left:668px;top:58px;width:6px;height:1px;background:#c678dd;opacity:0.5"></div><div class="abs" style="left:668px;top:59px;width:6px;height:1px;background:#c678dd;opacity:0.25"></div><div class="abs" style="left:675px;top:58px;width:1px;height:1px;background:#abb2bf;opacity:0.5"></div><div class="abs" style="left:675px;top:59px;width:1px;height:1px;background:#abb2bf;opacity:0.25"></div><div class="abs" style="left:677px;top:58px;width:14px;height:1px;background:#e06c75;opacity:0.5"></div><div class="abs" style="left:677px;top:59px;width:14px;height:1px;background:#e06c75;opacity:0.25"></div><div class="abs" style="left:692px;top:58px;width:1px;height:1px;background:#abb2bf;opacity:0.5"></div><div class="abs" style="left:692px;top:59px;width:1px;height:1px;background:#abb2bf;opacity:0.25"></div><div class="abs" style="left:694px;top:58px;width:4px;height:1px;background:#c678dd;opacity:0.5"></div><div class="abs" style="left:694px;top:59px;width:4px;height:1px;background:#c678dd;opacity:0.25"></div><div class="abs" style="left:699px;top:58px;width:19px;height:1px;background:#98c379;opacity:0.5"></div><div class="abs" style="left:699px;top:59px;width:19px;height:1px;background:#98c379;opacity:0.25"></div><div class="abs" style="left:718px;top:58px;width:1px;height:1px;background:#abb2bf;opacity:0.5"></div><div class="abs" style="left:718px;top:59px;width:1px;height:1px;background:#abb2bf;opacity:0.25"></div><div class="abs" style="left:668px;top:60px;width:6px;height:1px;background:#c678dd;opacity:0.5"></div><div class="abs" style="left:668px;top:61px;width:6px;height:1px;background:#c678dd;opacity:0.25"></div><div class="abs" style="left:675px;top:60px;width:1px;height:1px;background:#abb2bf;opacity:0.5"></div><div class="abs" style="left:675px;top:61px;width:1px;height:1px;background:#abb2bf;opacity:0.25"></div><div class="abs" style="left:677px;top:60px;width:17px;height:1px;background:#e06c75;opacity:0.5"></div><div class="abs" style="left:677px;top:61px;width:17px;height:1px;background:#e06c75;opacity:0.25"></div><div class="abs" style="left:695px;top:60px;width:1px;height:1px;background:#abb2bf;opacity:0.5"></div><div class="abs" style="left:695px;top:61px;width:1px;height:1px;background:#abb2bf;opacity:0.25"></div><div class="abs" style="left:697px;top:60px;width:4px;height:1px;background:#c678dd;opacity:0.5"></div><div class="abs" style="left:697px;top:61px;width:4px;height:1px;background:#c678dd;opacity:0.25"></div><div class="abs" style="left:702px;top:60px;width:22px;height:1px;background:#98c379;opacity:0.5"></div><div class="abs" style="left:702px;top:61px;width:22px;height:1px;background:#98c379;opacity:0.25"></div><div class="abs" style="left:724px;top:60px;width:1px;height:1px;background:#abb2bf;opacity:0.5"></div><div class="abs" style="left:724px;top:61px;width:1px;height:1px;background:#abb2bf;opacity:0.25"></div><div class="abs" style="left:668px;top:62px;width:6px;height:1px;background:#c678dd;opacity:0.5"></div><div class="abs" style="left:668px;top:63px;width:6px;height:1px;background:#c678dd;opacity:0.25"></div><div class="abs" style="left:675px;top:62px;width:1px;height:1px;background:#abb2bf;opacity:0.5"></div><div class="abs" style="left:675px;top:63px;width:1px;height:1px;background:#abb2bf;opacity:0.25"></div><div class="abs" style="left:677px;top:62px;width:5px;height:1px;background:#e06c75;opacity:0.5"></div><div class="abs" style="left:677px;top:63px;width:5px;height:1px;background:#e06c75;opacity:0.25"></div><div class="abs" style="left:683px;top:62px;width:1px;height:1px;background:#abb2bf;opacity:0.5"></div><div class="abs" style="left:683px;top:63px;width:1px;height:1px;background:#abb2bf;opacity:0.25"></div><div class="abs" style="left:685px;top:62px;width:4px;height:1px;background:#c678dd;opacity:0.5"></div><div class="abs" style="left:685px;top:63px;width:4px;height:1px;background:#c678dd;opacity:0.25"></div><div class="abs" style="left:690px;top:62px;width:10px;height:1px;background:#98c379;opacity:0.5"></div><div class="abs" style="left:690px;top:63px;width:10px;height:1px;background:#98c379;opacity:0.25"></div><div class="abs" style="left:700px;top:62px;width:1px;height:1px;background:#abb2bf;opacity:0.5"></div><div class="abs" style="left:700px;top:63px;width:1px;height:1px;background:#abb2bf;opacity:0.25"></div><div class="abs" style="left:668px;top:64px;width:6px;height:1px;background:#c678dd;opacity:0.5"></div><div class="abs" style="left:668px;top:65px;width:6px;height:1px;background:#c678dd;opacity:0.25"></div><div class="abs" style="left:675px;top:64px;width:1px;height:1px;background:#abb2bf;opacity:0.5"></div><div class="abs" style="left:675px;top:65px;width:1px;height:1px;background:#abb2bf;opacity:0.25"></div><div class="abs" style="left:677px;top:64px;width:16px;height:1px;background:#e06c75;opacity:0.5"></div><div class="abs" style="left:677px;top:65px;width:16px;height:1px;background:#e06c75;opacity:0.25"></div><div class="abs" style="left:694px;top:64px;width:1px;height:1px;background:#abb2bf;opacity:0.5"></div><div class="abs" style="left:694px;top:65px;width:1px;height:1px;background:#abb2bf;opacity:0.25"></div><div class="abs" style="left:696px;top:64px;width:4px;height:1px;background:#c678dd;opacity:0.5"></div><div class="abs" style="left:696px;top:65px;width:4px;height:1px;background:#c678dd;opacity:0.25"></div><div class="abs" style="left:701px;top:64px;width:21px;height:1px;background:#98c379;opacity:0.5"></div><div class="abs" style="left:701px;top:65px;width:21px;height:1px;background:#98c379;opacity:0.25"></div><div class="abs" style="left:722px;top:64px;width:1px;height:1px;background:#abb2bf;opacity:0.5"></div><div class="abs" style="left:722px;top:65px;width:1px;height:1px;background:#abb2bf;opacity:0.25"></div><div class="abs" style="left:668px;top:68px;width:6px;height:1px;background:#c678dd;opacity:0.5"></div><div class="abs" style="left:668px;top:69px;width:6px;height:1px;background:#c678dd;opacity:0.25"></div><div class="abs" style="left:675px;top:68px;width:8px;height:1px;background:#c678dd;opacity:0.5"></div><div class="abs" style="left:675px;top:69px;width:8px;height:1px;background:#c678dd;opacity:0.25"></div><div class="abs" style="left:684px;top:68px;width:18px;height:1px;background:#61afef;opacity:0.5"></div><div class="abs" style="left:684px;top:69px;width:18px;height:1px;background:#61afef;opacity:0.25"></div><div class="abs" style="left:702px;top:68px;width:2px;height:1px;background:#abb2bf;opacity:0.5"></div><div class="abs" style="left:702px;top:69px;width:2px;height:1px;background:#abb2bf;opacity:0.25"></div><div class="abs" style="left:705px;top:68px;width:1px;height:1px;background:#abb2bf;opacity:0.5"></div><div class="abs" style="left:705px;top:69px;width:1px;height:1px;background:#abb2bf;opacity:0.25"></div><div class="abs" style="left:672px;top:72px;width:6px;height:1px;background:#c678dd;opacity:0.5"></div><div class="abs" style="left:672px;top:73px;width:6px;height:1px;background:#c678dd;opacity:0.25"></div><div class="abs" style="left:679px;top:72px;width:1px;height:1px;background:#abb2bf;opacity:0.5"></div><div class="abs" style="left:679px;top:73px;width:1px;height:1px;background:#abb2bf;opacity:0.25"></div><div class="abs" style="left:676px;top:74px;width:1px;height:1px;background:#abb2bf;opacity:0.5"></div><div class="abs" style="left:676px;top:75px;width:1px;height:1px;background:#abb2bf;opacity:0.25"></div><div class="abs" style="left:677px;top:74px;width:4px;height:1px;background:#e06c75;opacity:0.5"></div><div class="abs" style="left:677px;top:75px;width:4px;height:1px;background:#e06c75;opacity:0.25"></div><div class="abs" style="left:682px;top:74px;width:9px;height:1px;background:#d19a66;opacity:0.5"></div><div class="abs" style="left:682px;top:75px;width:9px;height:1px;background:#d19a66;opacity:0.25"></div><div class="abs" style="left:691px;top:74px;width:1px;height:1px;background:#abb2bf;opacity:0.5"></div><div class="abs" style="left:691px;top:75px;width:1px;height:1px;background:#abb2bf;opacity:0.25"></div><div class="abs" style="left:692px;top:74px;width:13px;height:1px;background:#98c379;opacity:0.5"></div><div class="abs" style="left:692px;top:75px;width:13px;height:1px;background:#98c379;opacity:0.25"></div><div class="abs" style="left:705px;top:74px;width:1px;height:1px;background:#abb2bf;opacity:0.5"></div><div class="abs" style="left:705px;top:75px;width:1px;height:1px;background:#abb2bf;opacity:0.25"></div><div class="abs" style="left:680px;top:76px;width:1px;height:1px;background:#abb2bf;opacity:0.5"></div><div class="abs" style="left:680px;top:77px;width:1px;height:1px;background:#abb2bf;opacity:0.25"></div><div class="abs" style="left:681px;top:76px;width:16px;height:1px;background:#e5c07b;opacity:0.5"></div><div class="abs" style="left:681px;top:77px;width:16px;height:1px;background:#e5c07b;opacity:0.25"></div><div class="abs" style="left:697px;top:76px;width:1px;height:1px;background:#abb2bf;opacity:0.5"></div><div class="abs" style="left:697px;top:77px;width:1px;height:1px;background:#abb2bf;opacity:0.25"></div><div class="abs" style="left:684px;top:78px;width:8px;height:1px;background:#abb2bf;opacity:0.5"></div><div class="abs" style="left:684px;top:79px;width:8px;height:1px;background:#abb2bf;opacity:0.25"></div><div class="abs" style="left:693px;top:78px;width:4px;height:1px;background:#abb2bf;opacity:0.5"></div><div class="abs" style="left:693px;top:79px;width:4px;height:1px;background:#abb2bf;opacity:0.25"></div><div class="abs" style="left:698px;top:78px;width:5px;height:1px;background:#abb2bf;opacity:0.5"></div><div class="abs" style="left:698px;top:79px;width:5px;height:1px;background:#abb2bf;opacity:0.25"></div><div class="abs" style="left:704px;top:78px;width:2px;height:1px;background:#abb2bf;opacity:0.5"></div><div class="abs" style="left:704px;top:79px;width:2px;height:1px;background:#abb2bf;opacity:0.25"></div><div class="abs" style="left:707px;top:78px;width:7px;height:1px;background:#abb2bf;opacity:0.5"></div><div class="abs" style="left:707px;top:79px;width:7px;height:1px;background:#abb2bf;opacity:0.25"></div><div class="abs" style="left:680px;top:80px;width:2px;height:1px;background:#abb2bf;opacity:0.5"></div><div class="abs" style="left:680px;top:81px;width:2px;height:1px;background:#abb2bf;opacity:0.25"></div><div class="abs" style="left:682px;top:80px;width:16px;height:1px;background:#e5c07b;opacity:0.5"></div><div class="abs" style="left:682px;top:81px;width:16px;height:1px;background:#e5c07b;opacity:0.25"></div><div class="abs" style="left:698px;top:80px;width:1px;height:1px;background:#abb2bf;opacity:0.5"></div><div class="abs" style="left:698px;top:81px;width:1px;height:1px;background:#abb2bf;opacity:0.25"></div><div class="abs" style="left:680px;top:82px;width:1px;height:1px;background:#abb2bf;opacity:0.5"></div><div class="abs" style="left:680px;top:83px;width:1px;height:1px;background:#abb2bf;opacity:0.25"></div><div class="abs" style="left:681px;top:82px;width:17px;height:1px;background:#e5c07b;opacity:0.5"></div><div class="abs" style="left:681px;top:83px;width:17px;height:1px;background:#e5c07b;opacity:0.25"></div><div class="abs" style="left:698px;top:82px;width:1px;height:1px;background:#abb2bf;opacity:0.5"></div><div class="abs" style="left:698px;top:83px;width:1px;height:1px;background:#abb2bf;opacity:0.25"></div><div class="abs" style="left:684px;top:84px;width:1px;height:1px;background:#abb2bf;opacity:0.5"></div><div class="abs" style="left:684px;top:85px;width:1px;height:1px;background:#abb2bf;opacity:0.25"></div><div class="abs" style="left:685px;top:84px;width:5px;height:1px;background:#e5c07b;opacity:0.5"></div><div class="abs" style="left:685px;top:85px;width:5px;height:1px;background:#e5c07b;opacity:0.25"></div><div class="abs" style="left:691px;top:84px;width:7px;height:1px;background:#d19a66;opacity:0.5"></div><div class="abs" style="left:691px;top:85px;width:7px;height:1px;background:#d19a66;opacity:0.25"></div><div class="abs" style="left:698px;top:84px;width:1px;height:1px;background:#abb2bf;opacity:0.5"></div><div class="abs" style="left:698px;top:85px;width:1px;height:1px;background:#abb2bf;opacity:0.25"></div><div class="abs" style="left:699px;top:84px;width:6px;height:1px;background:#98c379;opacity:0.5"></div><div class="abs" style="left:699px;top:85px;width:6px;height:1px;background:#98c379;opacity:0.25"></div><div class="abs" style="left:705px;top:84px;width:1px;height:1px;background:#abb2bf;opacity:0.5"></div><div class="abs" style="left:705px;top:85px;width:1px;height:1px;background:#abb2bf;opacity:0.25"></div><div class="abs" style="left:688px;top:86px;width:4px;height:1px;background:#abb2bf;opacity:0.5"></div><div class="abs" style="left:688px;top:87px;width:4px;height:1px;background:#abb2bf;opacity:0.25"></div><div class="abs" style="left:693px;top:86px;width:1px;height:1px;background:#abb2bf;opacity:0.5"></div><div class="abs" style="left:693px;top:87px;width:1px;height:1px;background:#abb2bf;opacity:0.25"></div><div class="abs" style="left:695px;top:86px;width:4px;height:1px;background:#abb2bf;opacity:0.5"></div><div class="abs" style="left:695px;top:87px;width:4px;height:1px;background:#abb2bf;opacity:0.25"></div><div class="abs" style="left:700px;top:86px;width:2px;height:1px;background:#abb2bf;opacity:0.5"></div><div class="abs" style="left:700px;top:87px;width:2px;height:1px;background:#abb2bf;opacity:0.25"></div><div class="abs" style="left:703px;top:86px;width:7px;height:1px;background:#abb2bf;opacity:0.5"></div><div class="abs" style="left:703px;top:87px;width:7px;height:1px;background:#abb2bf;opacity:0.25"></div><div class="abs" style="left:684px;top:88px;width:2px;height:1px;background:#abb2bf;opacity:0.5"></div><div class="abs" style="left:684px;top:89px;width:2px;height:1px;background:#abb2bf;opacity:0.25"></div><div class="abs" style="left:686px;top:88px;width:5px;height:1px;background:#e5c07b;opacity:0.5"></div><div class="abs" style="left:686px;top:89px;width:5px;height:1px;background:#e5c07b;opacity:0.25"></div><div class="abs" style="left:691px;top:88px;width:1px;height:1px;background:#abb2bf;opacity:0.5"></div><div class="abs" style="left:691px;top:89px;width:1px;height:1px;background:#abb2bf;opacity:0.25"></div><div class="abs" style="left:684px;top:90px;width:1px;height:1px;background:#abb2bf;opacity:0.5"></div><div class="abs" style="left:684px;top:91px;width:1px;height:1px;background:#abb2bf;opacity:0.25"></div><div class="abs" style="left:685px;top:90px;width:14px;height:1px;background:#e5c07b;opacity:0.5"></div><div class="abs" style="left:685px;top:91px;width:14px;height:1px;background:#e5c07b;opacity:0.25"></div><div class="abs" style="left:688px;top:92px;width:4px;height:1px;background:#d19a66;opacity:0.5"></div><div class="abs" style="left:688px;top:93px;width:4px;height:1px;background:#d19a66;opacity:0.25"></div><div class="abs" style="left:692px;top:92px;width:1px;height:1px;background:#abb2bf;opacity:0.5"></div><div class="abs" style="left:692px;top:93px;width:1px;height:1px;background:#abb2bf;opacity:0.25"></div><div class="abs" style="left:693px;top:92px;width:6px;height:1px;background:#98c379;opacity:0.5"></div><div class="abs" style="left:693px;top:93px;width:6px;height:1px;background:#98c379;opacity:0.25"></div><div class="abs" style="left:688px;top:94px;width:2px;height:1px;background:#d19a66;opacity:0.5"></div><div class="abs" style="left:688px;top:95px;width:2px;height:1px;background:#d19a66;opacity:0.25"></div><div class="abs" style="left:690px;top:94px;width:1px;height:1px;background:#abb2bf;opacity:0.5"></div><div class="abs" style="left:690px;top:95px;width:1px;height:1px;background:#abb2bf;opacity:0.25"></div><div class="abs" style="left:691px;top:94px;width:6px;height:1px;background:#98c379;opacity:0.5"></div><div class="abs" style="left:691px;top:95px;width:6px;height:1px;background:#98c379;opacity:0.25"></div><div class="abs" style="left:688px;top:96px;width:11px;height:1px;background:#d19a66;opacity:0.5"></div><div class="abs" style="left:688px;top:97px;width:11px;height:1px;background:#d19a66;opacity:0.25"></div><div class="abs" style="left:699px;top:96px;width:1px;height:1px;background:#abb2bf;opacity:0.5"></div><div class="abs" style="left:699px;top:97px;width:1px;height:1px;background:#abb2bf;opacity:0.25"></div><div class="abs" style="left:700px;top:96px;width:7px;height:1px;background:#98c379;opacity:0.5"></div><div class="abs" style="left:700px;top:97px;width:7px;height:1px;background:#98c379;opacity:0.25"></div><div class="abs" style="left:708px;top:96px;width:3px;height:1px;background:#98c379;opacity:0.5"></div><div class="abs" style="left:708px;top:97px;width:3px;height:1px;background:#98c379;opacity:0.25"></div><div class="abs" style="left:712px;top:96px;width:5px;height:1px;background:#98c379;opacity:0.5"></div><div class="abs" style="left:712px;top:97px;width:5px;height:1px;background:#98c379;opacity:0.25"></div><div class="abs" style="left:684px;top:98px;width:2px;height:1px;background:#abb2bf;opacity:0.5"></div><div class="abs" style="left:684px;top:99px;width:2px;height:1px;background:#abb2bf;opacity:0.25"></div><div class="abs" style="left:680px;top:100px;width:2px;height:1px;background:#abb2bf;opacity:0.5"></div><div class="abs" style="left:680px;top:101px;width:2px;height:1px;background:#abb2bf;opacity:0.25"></div><div class="abs" style="left:682px;top:100px;width:17px;height:1px;background:#e5c07b;opacity:0.5"></div><div class="abs" style="left:682px;top:101px;width:17px;height:1px;background:#e5c07b;opacity:0.25"></div><div class="abs" style="left:699px;top:100px;width:1px;height:1px;background:#abb2bf;opacity:0.5"></div><div class="abs" style="left:699px;top:101px;width:1px;height:1px;background:#abb2bf;opacity:0.25"></div><div class="abs" style="left:676px;top:102px;width:2px;height:1px;background:#abb2bf;opacity:0.5"></div><div class="abs" style="left:676px;top:103px;width:2px;height:1px;background:#abb2bf;opacity:0.25"></div><div class="abs" style="left:678px;top:102px;width:4px;height:1px;background:#e06c75;opacity:0.5"></div><div class="abs" style="left:678px;top:103px;width:4px;height:1px;background:#e06c75;opacity:0.25"></div><div class="abs" style="left:682px;top:102px;width:1px;height:1px;background:#abb2bf;opacity:0.5"></div><div class="abs" style="left:682px;top:103px;width:1px;height:1px;background:#abb2bf;opacity:0.25"></div><div class="abs" style="left:672px;top:104px;width:1px;height:1px;background:#abb2bf;opacity:0.5"></div><div class="abs" style="left:672px;top:105px;width:1px;height:1px;background:#abb2bf;opacity:0.25"></div><div class="abs" style="left:668px;top:106px;width:1px;height:1px;background:#abb2bf;opacity:0.5"></div><div class="abs" style="left:668px;top:107px;width:1px;height:1px;background:#abb2bf;opacity:0.25"></div><div class="abs" style="left:744px;top:56px;width:1px;height:727px;background:#2f333b"></div><div class="abs" style="left:745px;top:56px;width:6px;height:583px;background:#3e4451"></div><div class="abs" style="left:746px;top:365px;width:5px;height:3px;background:#4d78cc"></div></div></body></html>
